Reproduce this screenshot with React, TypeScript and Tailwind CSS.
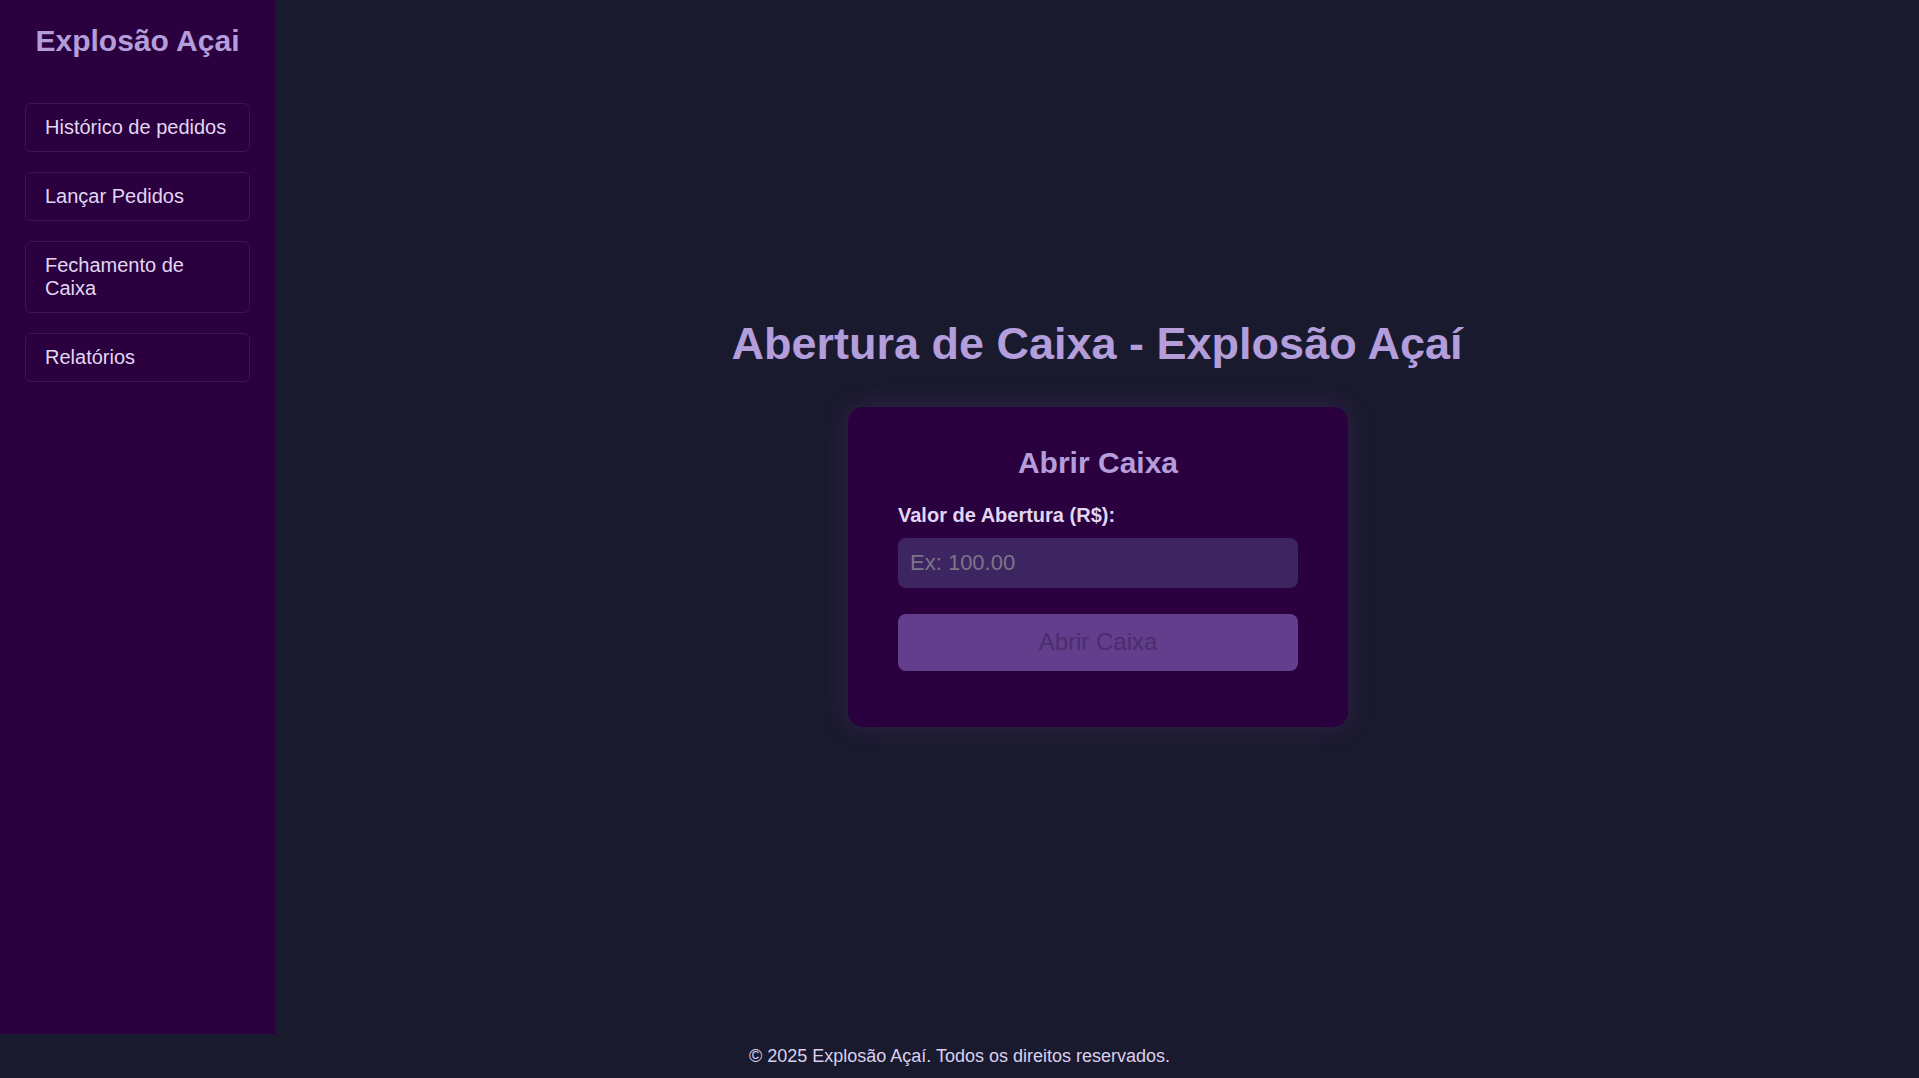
import { useState } from 'react'

const NAV = ['Histórico de pedidos', 'Lançar Pedidos', 'Fechamento de Caixa', 'Relatórios']

function Sidebar() {
  return (
    <aside className="flex w-[275px] shrink-0 flex-col bg-[#2b003e] px-[25px] pt-[23px]">
      <h1 className="text-center text-[30px] font-bold leading-[35px] text-[#b39ddb]">Explosão Açai</h1>
      <nav className="mt-[45px] flex flex-col gap-[20px]">
        {NAV.map((item) => (
          <a
            key={item}
            href="#"
            className="block rounded-[6px] border border-[#3b1652] px-[19px] py-[12px] text-[20px] leading-[23px] text-[#e2d6f5]"
          >
            {item}
          </a>
        ))}
      </nav>
    </aside>
  )
}

function AbrirCaixa() {
  const [valor, setValor] = useState('')

  return (
    <div className="w-[500px] rounded-[15px] bg-[#2b003e] px-[50px] pt-[38px] pb-[56px] shadow-[0_0_24px_rgba(120,60,160,0.25)]">
      <h2 className="text-center text-[30px] font-bold leading-[35px] text-[#b39ddb]">Abrir Caixa</h2>
      <label className="mt-[24px] block text-[20px] font-bold leading-[23px] text-[#e2d6f5]">
        Valor de Abertura (R$):
      </label>
      <input
        value={valor}
        onChange={(e) => setValor(e.target.value)}
        placeholder="Ex: 100.00"
        className="mt-[11px] block h-[50px] w-full rounded-[8px] bg-[#3d2562] px-[12px] text-[22px] text-[#e2d6f5] outline-none placeholder:text-[#7d7487]"
      />
      <button
        disabled
        className="mt-[26px] block h-[57px] w-full rounded-[8px] bg-[#623e8c] text-[24px] text-[#4a2d6e]"
      >
        Abrir Caixa
      </button>
    </div>
  )
}

export default function App() {
  return (
    <div className="flex h-screen flex-col bg-[#1a1a2e] font-['Liberation_Sans',Arial,sans-serif]">
      <div className="flex min-h-0 flex-1">
        <Sidebar />
        <main className="flex flex-1 flex-col items-center justify-center pt-[10px]">
          <h1 className="text-[45px] font-bold leading-[52px] text-[#b39ddb]">Abertura de Caixa - Explosão Açaí</h1>
          <div className="mt-[37px] ml-[2px]">
            <AbrirCaixa />
          </div>
        </main>
      </div>
      <footer className="flex h-[44px] shrink-0 items-center justify-center text-[18px] text-[#d9d0f0]">
        © 2025 Explosão Açaí. Todos os direitos reservados.
      </footer>
    </div>
  )
}
